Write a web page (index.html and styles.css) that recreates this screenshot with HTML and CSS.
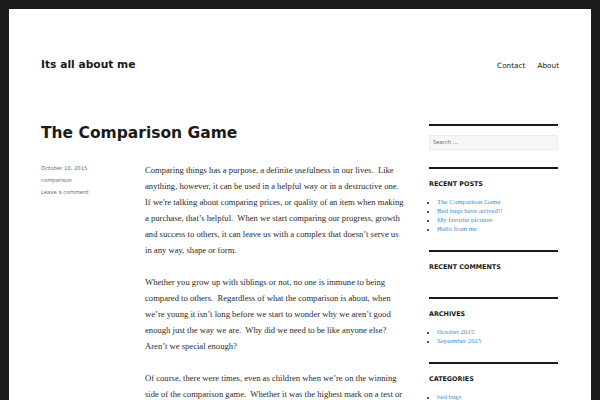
FILE: index.html
```html
<!DOCTYPE html>
<html lang="en">
<head>
<meta charset="utf-8">
<title>Its all about me</title>
<link rel="stylesheet" href="styles.css">
</head>
<body>
<div class="site">
  <header class="site-header">
    <p class="site-title">Its all about me</p>
    <nav class="main-nav">
      <a href="#">Contact</a>
      <a href="#">About</a>
    </nav>
  </header>
  <div class="site-content">
    <main class="primary">
      <h1 class="entry-title">The Comparison Game</h1>
      <div class="entry">
        <footer class="entry-meta">
          <div>October 10, 2015</div>
          <div>comparison</div>
          <div>Leave a comment</div>
        </footer>
        <div class="entry-content">
          <p>Comparing things has a purpose, a definite usefulness in our lives.&nbsp; Like anything, however, it can be used in a helpful way or in a destructive one.&nbsp; If we're talking about comparing prices, or quality of an item when making a purchase, that’s helpful.&nbsp; When we start comparing our progress, growth and success to others, it can leave us with a complex that doesn’t serve us in any way, shape or form.</p>
          <p>Whether you grow up with siblings or not, no one is immune to being compared to others.&nbsp; Regardless of what the comparison is about, when we’re young it isn’t long before we start to wonder why we aren’t good enough just the way we are.&nbsp; Why did we need to be like anyone else?&nbsp; Aren’t we special enough?</p>
          <p>Of course, there were times, even as children when we’re on the winning side of the comparison game.&nbsp; Whether it was the highest mark on a test or project, we felt, because we feel that those marks meantwe were “better than” our classmates.&nbsp; If we're not careful the need to outdo others can carry more meaning than the task itself.&nbsp; As we get older and become employees the comparison game is often about out-performing our colleagues or whoever we consider to be competition for whatever goal it is we are striving for.</p>
        </div>
      </div>
    </main>
    <aside class="sidebar">
      <section class="widget widget-search">
        <div class="search-field">Search …</div>
      </section>
      <section class="widget">
        <h2 class="widget-title">Recent Posts</h2>
        <ul>
          <li><a href="#">The Comparison Game</a></li>
          <li><a href="#">Bed bugs have arrived!!</a></li>
          <li><a href="#">My favorite pictures</a></li>
          <li><a href="#">Hello from me</a></li>
        </ul>
      </section>
      <section class="widget">
        <h2 class="widget-title">Recent Comments</h2>
      </section>
      <section class="widget">
        <h2 class="widget-title">Archives</h2>
        <ul>
          <li><a href="#">October 2015</a></li>
          <li><a href="#">September 2015</a></li>
        </ul>
      </section>
      <section class="widget">
        <h2 class="widget-title">Categories</h2>
        <ul>
          <li><a href="#">bed bugs</a></li>
          <li><a href="#">comparison</a></li>
        </ul>
      </section>
    </aside>
  </div>
</div>
</body>
</html>
```
FILE: styles.css
```css
html, body {
  margin: 0;
  padding: 0;
  height: 100%;
  overflow: hidden;
}
body {
  background: #1a1a1a;
  font-family: "DejaVu Sans", sans-serif;
  color: #1a1a1a;
}
.site {
  margin: 9px 9px 0;
  background: #fff;
  min-height: 391px;
}
.site-header {
  display: flex;
  justify-content: space-between;
  align-items: center;
  padding: 48px 32px 50px;
  height: 16px;
}
.site-title {
  margin: 0;
  font-weight: bold;
  font-size: 10.7px;
  line-height: 16px;
}
.main-nav {
  display: flex;
  gap: 12px;
  margin-top: 2px;
}
.main-nav a {
  color: #1a1a1a;
  text-decoration: none;
  font-size: 7.3px;
  line-height: 12px;
}
.site-content {
  display: flex;
  gap: 23px;
  padding: 0 33px 0 32px;
}
.primary {
  width: 365px;
}
.entry-title {
  margin: 0 0 19px;
  font-size: 15.5px;
  line-height: 20px;
  font-weight: bold;
}
.entry {
  display: flex;
}
.entry-meta {
  width: 104px;
  flex: none;
  font-size: 5.3px;
  line-height: 12px;
  color: #686868;
}
.entry-content {
  width: 261px;
  font-family: "Liberation Serif", serif;
  font-size: 8.62px;
  line-height: 16px;
  color: #2a2a2a;
}
.entry-content p {
  margin: 0 0 16px;
}
.sidebar {
  width: 129px;
  flex: none;
  padding-top: 1px;
}
.widget {
  border-top: 2px solid #1a1a1a;
  padding: 11px 0 17.5px;
}
.widget-search {
  padding: 9px 0 17px;
}
.search-field {
  height: 13px;
  background: #f7f7f7;
  border: 1px solid #ececec;
  font-size: 5.3px;
  line-height: 13px;
  padding-left: 3px;
  color: #686868;
}
.widget-title {
  margin: 0 0 8.5px;
  font-size: 6.4px;
  line-height: 8px;
  font-weight: bold;
  text-transform: uppercase;
}
.widget ul {
  margin: 0;
  padding: 0 0 0 8px;
  list-style: disc;
  font-family: "Liberation Serif", serif;
  font-size: 6.8px;
  line-height: 9px;
}
.widget li::marker {
  color: #1a1a1a;
  font-size: 6px;
}
.widget a {
  color: #3b8dcc;
  text-decoration: none;
}
```
